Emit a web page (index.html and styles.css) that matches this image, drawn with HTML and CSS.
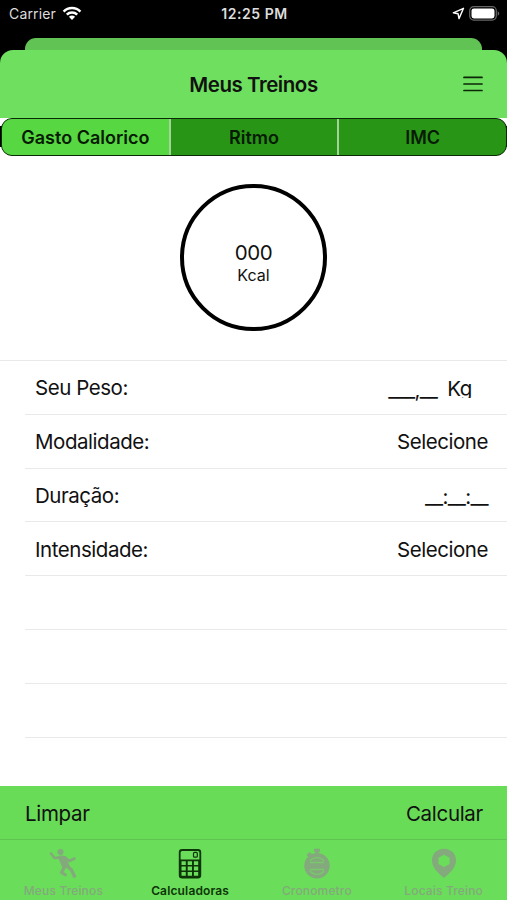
FILE: index.html
```
<!DOCTYPE html>
<html lang="pt-BR">
  <head>
    <meta charset="UTF-8" />
    <title>Meus Treinos</title>
    <link rel="stylesheet" href="styles.css">
  </head>
  <body>
    <div class="status-bar">
      <div class="carrier">
        <span>Carrier</span>
        <svg width="20" height="15" viewBox="0 0 20 15">
          <path d="M1.600 5.600a11.800 11.800 0 0 1 16.800 0M4.800 8.700a7.400 7.400 0 0 1 10.400 0" fill="none" stroke="#fff" stroke-width="2.500" />
          <path d="M6.900 10.800a4.600 4.600 0 0 1 6.200 0L10 14z" fill="#fff" />
        </svg>
      </div>
      <div class="clock">12:25 PM</div>
      <div class="indicators">
        <svg width="13" height="13" viewBox="0 0 13 13">
          <path d="M11.5 1.3L1.3 5.8l4.800 1 .9 4.800z" fill="none" stroke="#fff" stroke-width="1.4" stroke-linejoin="round" />
        </svg>
        <svg width="31" height="15" viewBox="0 0 31 15">
          <rect x=".7" y=".7" width="26.6" height="13.4" rx="4" fill="none" stroke="#666" stroke-width="1.2" />
          <rect x="2.5" y="2.4" width="23" height="10" rx="2.4" fill="#fff" />
          <path d="M28.7 5.2c2 .8 2 3.7 0 4.5z" fill="#666" />
        </svg>
      </div>
    </div>

    <div class="back-card"></div>
    <div class="header-wrap">
      <header class="header">
        <h1>Meus Treinos</h1>
        <button type="button" class="menu" aria-label="Menu">
          <svg width="20" height="16" viewBox="0 0 20 16">
            <path d="M1 1.4h18M1 8h18M1 14.5h18" stroke="#0c2608" stroke-width="1.7" stroke-linecap="round" />
          </svg>
        </button>
      </header>
    </div>

    <nav class="segments-wrap">
      <div class="segments">
        <button type="button" class="segment selected">Gasto Calorico</button>
        <button type="button" class="segment">Ritmo</button>
        <button type="button" class="segment">IMC</button>
      </div>
    </nav>

    <main>
      <section class="result">
        <div class="circle">
          <span class="value">000</span>
          <span class="unit">Kcal</span>
        </div>
      </section>

      <ul class="rows">
        <li class="row">
          <span>Seu Peso:</span>
          <span class="weight"><span class="mask">___,__</span><span class="kg">Kg</span></span>
        </li>
        <li class="row"><span>Modalidade:</span><span>Selecione</span></li>
        <li class="row"><span>Duração:</span><span class="mask">__:__:__</span></li>
        <li class="row"><span>Intensidade:</span><span>Selecione</span></li>
        <li class="row"></li>
        <li class="row"></li>
        <li class="row"></li>
      </ul>
    </main>

    <div class="toolbar">
      <button type="button">Limpar</button>
      <button type="button">Calcular</button>
    </div>

    <nav class="tabs">
      <a class="tab">
        <svg width="30" height="32" viewBox="0 0 30 32">
          <circle cx="12.500" cy="4" r="3" />
          <path d="M3 5.500l3.500 4.500 5.500-.5M17 9.500l4.500 3.500 5-2.500" fill="none" stroke="currentColor" stroke-width="2.600" stroke-linejoin="round" stroke-linecap="round" />
          <path d="M9.500 8.500q4-2 8.500 0l3.500 9.500-6.500 3z" />
          <path d="M17 18l-3.500 6.500 5 3M19 18l4.500 4 3.500 7.500" fill="none" stroke="currentColor" stroke-width="3.200" stroke-linejoin="round" />
        </svg>
        <span>Meus Treinos</span>
      </a>
      <a class="tab active">
        <svg width="30" height="32" viewBox="0 0 30 32">
          <rect x="4.700" y="2" width="20.600" height="27.600" rx="2.400" fill="none" stroke="currentColor" stroke-width="1.800" />
          <path d="M5 11.500h20v15.500q0 2.500-2 2.500H7q-2 0-2-2.500z" />
          <rect x="18.500" y="4.400" width="3.800" height="4.800" rx="1" fill="none" stroke="currentColor" stroke-width="1.200" />
          <g class="keys">
            <path d="M6.500 13.200h4.300v3.800H6.500zM12.700 13.200H17v3.800h-4.300zM18.900 13.200h4.300v3.800h-4.300z" />
            <path d="M6.500 18.600h4.300v3.800H6.500zM12.700 18.600H17v3.800h-4.300zM18.900 18.600h4.300v3.800h-4.300z" />
            <path d="M6.500 24h4.300v3.800H6.500zM12.700 24H17v3.800h-4.300zM18.900 24h4.300v3.800h-4.300z" />
          </g>
        </svg>
        <span>Calculadoras</span>
      </a>
      <a class="tab">
        <svg width="30" height="32" viewBox="0 0 30 32">
          <circle cx="15" cy="17.800" r="12.700" />
          <path d="M12 .8h6v3h-1.500V6h-3V3.800H12zM4.500 7l3-3 3 2.500-3 3.500z" />
          <path d="M8 13a9 9 0 0 1 14 0M8 23a9 9 0 0 0 14 0M8 14.500h14M8 21.500h14" fill="none" stroke="#78c96c" stroke-width="1.300" />
        </svg>
        <span>Cronometro</span>
      </a>
      <a class="tab">
        <svg width="30" height="32" viewBox="0 0 30 32">
          <path d="M15 .8C8 .8 3 5.800 3 12.600 3 20 10 26 15 30c5-4 12-10 12-17.400C27 5.800 22 .8 15 .8zM15 6.800l5.600 2.900v6.300L15 19l-5.600-3V9.700z" fill-rule="evenodd" />
        </svg>
        <span>Locais Treino</span>
      </a>
    </nav>
  </body>
</html>
```
FILE: styles.css
```
* {
  box-sizing: border-box;
}
body {
  margin: 0;
  width: 507px;
  height: 900px;
  overflow: hidden;
  display: flex;
  flex-direction: column;
  background: #fff;
  color: #111;
  font-family: Inter, "Liberation Sans", sans-serif;
  font-size: 20.5px;
  letter-spacing: -0.45px;
}
button {
  padding: 0;
  border: none;
  background: none;
  color: inherit;
  font: inherit;
  letter-spacing: inherit;
}
svg {
  display: block;
  fill: currentColor;
}

/* status bar */
.status-bar {
  height: 38px;
  padding: 0 7px 11px 9px;
  display: grid;
  grid-template-columns: 1fr auto 1fr;
  align-items: center;
  background: #000;
  color: #ddd;
  font-size: 14px;
  letter-spacing: 0.15px;
}
.carrier {
  display: flex;
  align-items: center;
  gap: 6px;
}
.clock {
  font-weight: 600;
  letter-spacing: 0.55px;
}
.indicators {
  display: flex;
  align-items: center;
  justify-content: flex-end;
  gap: 4px;
}

/* stacked cards */
.back-card {
  height: 12px;
  padding: 0 25px;
  background: #000;
}
.back-card::before {
  content: "";
  display: block;
  height: 12px;
  border-radius: 11px 11px 0 0;
  background: #61c353;
}
.header-wrap {
  background: #000;
}
.header {
  height: 68px;
  padding: 0 24px;
  border-radius: 13px 13px 0 0;
  background: #6edf5e;
  display: grid;
  grid-template-columns: 1fr auto 1fr;
  align-items: center;
}
.header h1 {
  grid-column: 2;
  margin: 0;
  font-size: 20.5px;
  font-weight: 600;
}
.menu {
  justify-self: end;
}

/* segmented control */
.segments-wrap {
  height: 38px;
  background: linear-gradient(#fff 8px, #000 8px, #000 29px, #fff 29px);
}
.segments {
  height: 38px;
  margin-left: 1px;
  display: flex;
  border: 1.5px solid #0b2b06;
  border-radius: 11px;
  background: #299517;
  overflow: hidden;
}
.segment {
  flex: 1;
  font-size: 18px;
  font-weight: 600;
  letter-spacing: 0;
  color: #061b03;
}
.segment + .segment {
  border-left: 2px solid #a3d59b;
}
.segment.selected {
  background: #57d742;
}

/* result */
.result {
  height: 205px;
  padding-top: 28px;
  border-bottom: 1px solid #e9e9e9;
}
.circle {
  width: 147px;
  height: 147px;
  margin: 0 auto;
  padding-top: 10px;
  border: 4px solid #000;
  border-radius: 50%;
  display: flex;
  flex-direction: column;
  align-items: center;
  justify-content: center;
}
.value {
  line-height: 24px;
}
.unit {
  font-size: 16px;
  line-height: 20px;
  letter-spacing: 0;
}

/* rows */
.rows {
  margin: 0;
  padding: 0 0 0 25px;
  list-style: none;
}
.row {
  height: 53.8px;
  padding: 1px 19px 0 10px;
  border-bottom: 1px solid #e9e9e9;
  display: flex;
  align-items: center;
  justify-content: space-between;
}
.weight {
  display: flex;
  align-items: center;
  gap: 10px;
  padding-right: 16px;
}
.mask {
  padding-top: 3px;
  letter-spacing: -0.6px;
}
/* the field is shorter than its text, so the descender is cut */
.kg {
  height: 20px;
  line-height: 21px;
  overflow: hidden;
}

/* bottom bars */
.toolbar {
  height: 54px;
  margin-top: auto;
  padding: 1px 24px 0 25px;
  border-bottom: 1px solid #5fc451;
  background: #68db57;
  display: flex;
  align-items: center;
  justify-content: space-between;
  letter-spacing: -0.3px;
}
.tabs {
  height: 60px;
  padding-top: 8px;
  background: #6add5b;
  display: grid;
  grid-template-columns: repeat(4, 1fr);
}
.tab {
  display: flex;
  flex-direction: column;
  align-items: center;
  gap: 3px;
  color: #84a97c;
  font-size: 12px;
  font-weight: 500;
  letter-spacing: 0.15px;
}
.tab.active {
  color: #0d3507;
  font-weight: 600;
}
.keys {
  fill: #6add5b;
}
```
